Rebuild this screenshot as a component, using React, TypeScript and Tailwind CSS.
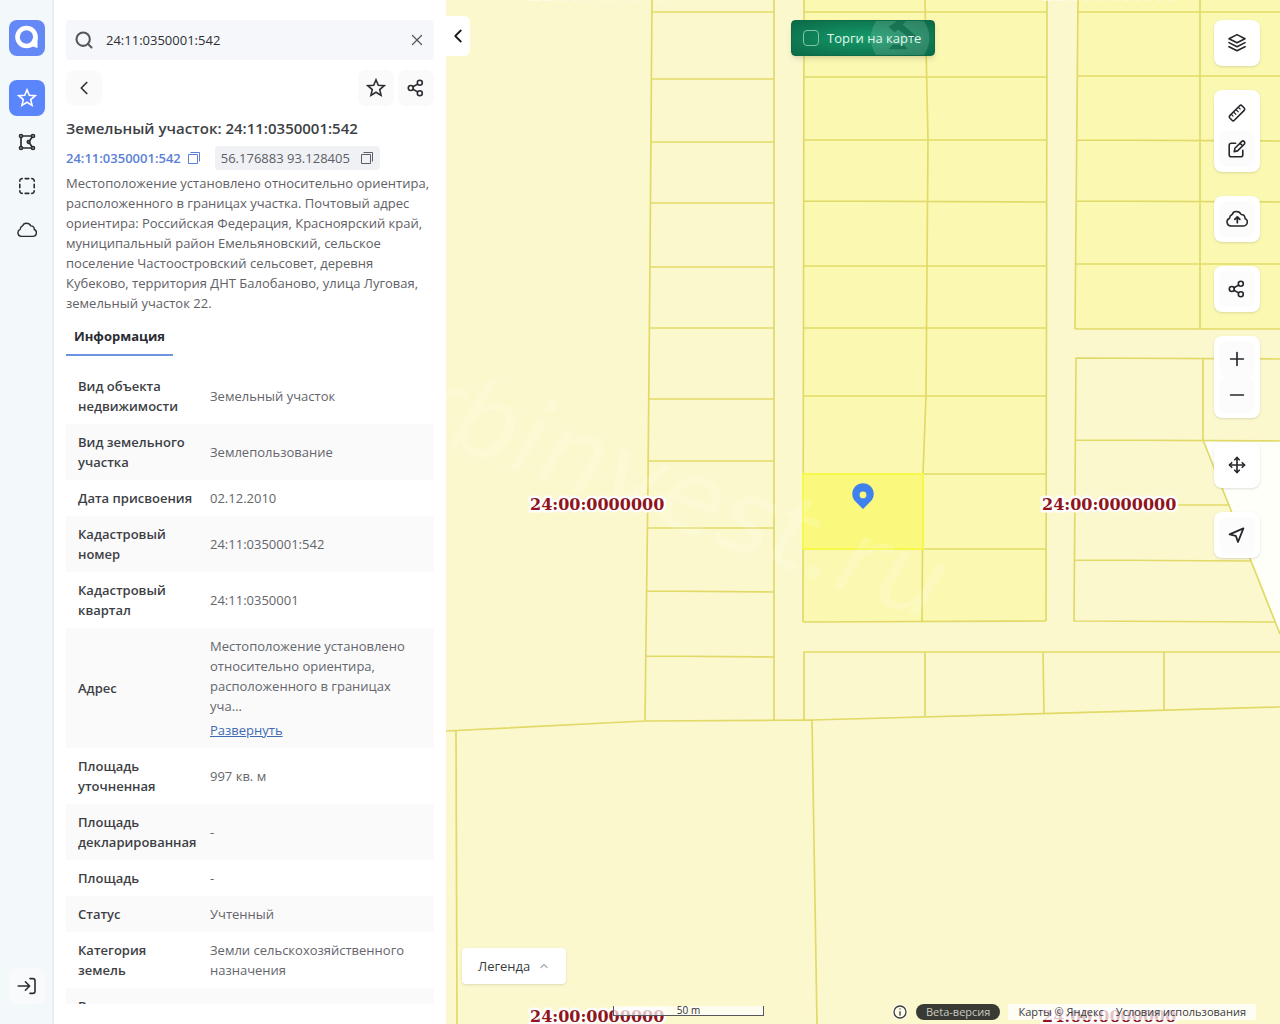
import type { ReactNode } from 'react'

import { useState } from 'react'
import { ChevronLeft, ChevronUp, Minus, Move, Plus, Search, X } from 'lucide-react'
import clsx from 'clsx'

const address =
  'Местоположение установлено относительно ориентира, расположенного в границах участка. Почтовый адрес ориентира: Российская Федерация, Красноярский край, муниципальный район Емельяновский, сельское поселение Частоостровский сельсовет, деревня Кубеково, территория ДНТ Балобаново, улица Луговая, земельный участок 22.'

const rows = [
  { label: 'Вид объекта недвижимости', value: 'Земельный участок' },
  { label: 'Вид земельного участка', value: 'Землепользование' },
  { label: 'Дата присвоения', value: '02.12.2010' },
  { label: 'Кадастровый номер', value: '24:11:0350001:542' },
  { label: 'Кадастровый квартал', value: '24:11:0350001' },
  { label: 'Адрес', value: address, long: true },
  { label: 'Площадь уточненная', value: '997 кв. м' },
  { label: 'Площадь декларированная', value: '-' },
  { label: 'Площадь', value: '-' },
  { label: 'Статус', value: 'Учтенный' },
  { label: 'Категория\nземель', value: 'Земли сельскохозяйственного назначения' },
  { label: 'Вид разрешенного использования', value: '' }
]

function Icon({ children, size = 20 }: { children: ReactNode; size?: number }) {
  return (
    <svg
      width={size}
      height={size}
      viewBox="0 0 20 20"
      fill="none"
      stroke="currentColor"
      strokeWidth="1.6"
      strokeLinecap="round"
      strokeLinejoin="round"
      aria-hidden="true"
    >
      {children}
    </svg>
  )
}

const StarIcon = () => (
  <Icon>
    <path
      strokeLinejoin="miter"
      d="M10 1.8l2.3 5.4 5.9.5-4.5 3.9 1.4 5.8-5.1-3.1-5.1 3.1 1.4-5.8-4.5-3.9 5.9-.5z"
    />
  </Icon>
)

const ShareIcon = () => (
  <Icon>
    <circle cx="4.8" cy="10" r="2.5" />
    <circle cx="13.8" cy="4.8" r="2.5" />
    <circle cx="13.8" cy="15.2" r="2.5" />
    <path d="M7 8.8l4.6-2.7M7 11.2l4.6 2.7" />
  </Icon>
)

const PolygonIcon = () => (
  <Icon>
    <g strokeWidth="1.7">
      <circle cx="4" cy="4" r="1.5" />
      <circle cx="16" cy="4" r="1.5" />
      <circle cx="11.6" cy="10" r="1.3" />
      <circle cx="4" cy="16" r="1.5" />
      <circle cx="16" cy="16" r="1.5" />
      <path d="M4 5.6v8.8M5.6 4h8.8M5.6 16h8.8M15 5.2l-2.6 3.7M15 14.8l-2.6-3.7" />
    </g>
  </Icon>
)

const AreaIcon = () => (
  <Icon>
    <path d="M2.8 5.2V5A2.4 2.4 0 0 1 5.2 2.6M8.2 2.6h3.6M14.8 2.6A2.4 2.4 0 0 1 17.2 5v.2M17.2 8.2v3.6M17.2 14.8v.2a2.4 2.4 0 0 1-2.4 2.4M11.8 17.4H8.2M5.2 17.4A2.4 2.4 0 0 1 2.8 15v-.2M2.8 11.8V8.2" />
  </Icon>
)

const cloudPath =
  'M4.4 16.4a3.7 3.7 0 0 1-1.2-7.1c.2-1.9 1.2-3 2.6-3.6.4-1.6 1.9-2.5 3.6-2.5 2 0 3.6 1 4.4 2.7 2.2.1 3.5 1.6 3.5 3.6 1.4.6 2.1 1.7 2.1 3.1 0 2.1-1.5 3.8-3.6 3.8z'

const CloudIcon = () => (
  <Icon>
    <path d={cloudPath} strokeWidth="1.4" />
  </Icon>
)

const CloudUploadIcon = () => (
  <Icon size={22}>
    <path d={cloudPath} strokeWidth="1.4" />
    <path d="M10.3 13.4V8.3M8 10.4l2.3-2.3 2.3 2.3" />
  </Icon>
)

const LoginIcon = () => (
  <Icon>
    <path d="M1.2 10h11M8.4 5.8l4.2 4.2-4.2 4.2M13 2.6h2.8A2.2 2.2 0 0 1 18 4.8v10.4a2.2 2.2 0 0 1-2.2 2.2H13" />
  </Icon>
)

const LayersIcon = () => (
  <Icon>
    <path d="M10 1.6l8 4.1-8 4.1-8-4.1zM2 9.6l8 4.1 8-4.1M2 13.7l8 4.1 8-4.1" />
  </Icon>
)

const RulerIcon = () => (
  <Icon>
    <g transform="rotate(-45 10 10)">
      <rect x="1.4" y="6.8" width="17.2" height="6.4" rx="1.6" />
      <path strokeWidth="1.2" d="M5 9.4V7M8.3 10V7M11.7 10V7M15 9.4V7" />
    </g>
  </Icon>
)

const EditIcon = () => (
  <Icon>
    <path d="M8.6 4.2H4.2A2 2 0 0 0 2.2 6.2v9.6a2 2 0 0 0 2 2h9.6a2 2 0 0 0 2-2v-4.4" />
    <path d="M7.2 12.6l.7-3.3 6.7-6.7a1.8 1.8 0 0 1 2.6 2.6l-6.7 6.7zM13 4.2l2.6 2.6" />
  </Icon>
)

const LocateIcon = () => (
  <Icon>
    <path strokeWidth="1.8" d="M16.4 3.4L2.6 9.4l6.2 1.4 2.2 6.2z" />
  </Icon>
)

const CopyIcon = () => (
  <svg width="14" height="14" viewBox="0 0 14 14" fill="none" stroke="currentColor" aria-hidden="true">
    <path d="M1.5 3.5h9v9h-9zM3.5 1.5h9v9" />
  </svg>
)

const LogoIcon = () => (
  <svg width="36" height="36" viewBox="0 0 36 36" fill="none" aria-hidden="true">
    <circle cx="17.5" cy="17" r="9" stroke="white" strokeWidth="4.6" />
    <path d="M24.5 17h4v11l-8-2.5z" fill="white" />
  </svg>
)

function SquareButton({
  label,
  className,
  children
}: {
  label: string
  className?: string
  children: ReactNode
}) {
  return (
    <button
      type="button"
      aria-label={label}
      className={clsx('flex size-9 shrink-0 items-center justify-center rounded-lg', className)}
    >
      {children}
    </button>
  )
}

function Sidebar() {
  return (
    <nav className="flex w-[54px] shrink-0 flex-col items-center gap-2 bg-[#f3f8fa] py-5 text-[#2b2d33] shadow-[inset_-2px_0_#e9eef2]">
      <a href="#" aria-label="На главную" className="mb-4 size-9 rounded-lg bg-[#6488f5]">
        <LogoIcon />
      </a>
      <SquareButton label="Избранное" className="bg-[#5b85fb] text-white">
        <StarIcon />
      </SquareButton>
      <SquareButton label="Контур">
        <PolygonIcon />
      </SquareButton>
      <SquareButton label="Область">
        <AreaIcon />
      </SquareButton>
      <SquareButton label="Облако">
        <CloudIcon />
      </SquareButton>
      <SquareButton label="Войти" className="mt-auto bg-[#f9fafb]">
        <LoginIcon />
      </SquareButton>
    </nav>
  )
}

function InfoTable() {
  const [expanded, setExpanded] = useState(false)

  return (
    <table className="mt-3 w-full table-fixed text-left">
      <tbody>
        {rows.map(({ label, value, long }) => (
          <tr key={label} className="even:bg-[#fafafb]">
            <th
              scope="row"
              className="w-[132px] py-2 pl-3 align-middle font-semibold whitespace-pre-line text-[#3d3f45]"
            >
              {label}
            </th>
            <td className="py-2 pr-4 pl-3 align-middle text-[#64666b]">
              {long ? (
                <>
                  <p>{expanded ? value : `${value.slice(0, 80)}…`}</p>
                  <button
                    type="button"
                    onClick={() => setExpanded(!expanded)}
                    className="mt-1 block text-[#3f6cb0] underline"
                  >
                    {expanded ? 'Свернуть' : 'Развернуть'}
                  </button>
                </>
              ) : (
                value
              )}
            </td>
          </tr>
        ))}
      </tbody>
    </table>
  )
}

function Panel() {
  const [query, setQuery] = useState('24:11:0350001:542')

  return (
    <section className="flex w-[392px] shrink-0 flex-col bg-white px-3 py-5">
      <div className="flex h-10 shrink-0 items-center rounded bg-[#f5f7fa] px-2">
        <Search className="size-5 text-[#55575c]" strokeWidth={2.5} />
        <input
          type="text"
          aria-label="Поиск"
          value={query}
          onChange={(e) => setQuery(e.target.value)}
          className="min-w-0 flex-1 bg-transparent px-3 text-[#2e2f33] outline-none"
        />
        <button type="button" aria-label="Очистить" className="text-[#55575c]" onClick={() => setQuery('')}>
          <X className="size-[18px]" strokeWidth={1.6} />
        </button>
      </div>
      <div className="mt-2.5 flex shrink-0 gap-1 text-[#2b2d33]">
        <SquareButton label="Назад" className="mr-auto bg-[#fafafb]">
          <ChevronLeft className="size-[22px]" strokeWidth={1.8} />
        </SquareButton>
        <SquareButton label="В избранное" className="bg-[#fafafb]">
          <StarIcon />
        </SquareButton>
        <SquareButton label="Поделиться" className="bg-[#fafafb]">
          <ShareIcon />
        </SquareButton>
      </div>
      <div className="mt-2.5 min-h-0 flex-1 overflow-hidden">
        <h1 className="text-[15px] leading-6 font-semibold text-[#3d3f45]">
          Земельный участок: 24:11:0350001:542
        </h1>
        <div className="mt-1.5 flex items-center gap-3.5">
          <button type="button" className="flex h-6 items-center gap-1.5 text-[#5b7fd6]">
            <span className="font-semibold">24:11:0350001:542</span>
            <CopyIcon />
          </button>
          <button type="button" className="flex h-6 items-center gap-2.5 rounded bg-[#eff1f5] px-1.5 text-[#5c5f66]">
            56.176883 93.128405
            <CopyIcon />
          </button>
        </div>
        <p className="mt-[3px] text-[#5f6166]">{address}</p>
        <div role="tablist" className="mt-2 flex">
          <button
            type="button"
            role="tab"
            aria-selected="true"
            className="h-[35px] border-b-2 border-[#6c93e0] px-2 pb-1 font-bold text-[#2b2d33]"
          >
            Информация
          </button>
        </div>
        <InfoTable />
      </div>
    </section>
  )
}

const plots = [
  // western strip
  'M652 0L650 260 648 480 645 721M774 0V720',
  'M651 12H774M651 79H774M651 142H774M651 203H774M650 267H774M649 328H774M649 399H774M648 461H774M647 528H774M647 591L774 592M646 656L774 657',
  // central block
  'M804 0L803 622M925 0L928 140 926 396 923 474 922 622M1047 0L1046 621',
  'M804 12H1047M804 77H1047M804 140H1047M804 201L1047 202M804 266H1047M804 328H1047M804 396H1047M803 474H1047M803 549H1047M803 622L1046 621',
  // north-east block
  'M1078 0L1075 329M1200 0V329',
  'M1077 12H1280M1077 76H1280M1077 140L1280 141M1076 201L1280 202M1076 264H1280M1075 329H1280',
  // east block
  'M1280 359L1076 358 1074 621 1275 622M1203 358V440M1075 440L1280 441M1203 440L1280 634M1075 505H1229M1074 560L1252 561',
  // southern row
  'M1280 652H804V720M925 652V717M1043 652L1044 714M1164 652V711',
  'M446 731L645 721 812 720 1280 707M456 731L457 1024M812 720L817 1024'
]

const quarters = [
  [530, -2],
  [1042, -2],
  [530, 510],
  [1042, 510],
  [530, 1022],
  [1042, 1022]
]

function CadastreMap() {
  return (
    <svg
      className="block size-full"
      viewBox="446 0 834 1024"
      preserveAspectRatio="xMidYMid slice"
      role="img"
      aria-label="Кадастровая карта"
    >
      <rect x="446" width="834" height="1024" fill="#fcf8ce" />
      <path d="M804 0H1047L1046 621 803 622zM1078 0H1280V329H1075z" fill="#fbf8b2" />
      <path d="M1203 440L1280 441V634z" fill="#fffff9" />
      <path d={plots.join('')} fill="none" stroke="#e1da68" strokeWidth="1.7" />
      <path d="M803 474H923V549H803z" fill="#fbf87e" stroke="#f6f84a" strokeWidth="2" />
      <text
        transform="translate(405 430) rotate(20)"
        fontSize="103"
        className="fill-white font-['DejaVu_Sans'] italic opacity-15"
      >
        rbinvest.ru
      </text>
      {quarters.map(([x, y]) => (
        <text
          key={`${x}-${y}`}
          x={x}
          y={y}
          fontSize="16"
          stroke="white"
          strokeWidth="5"
          strokeLinejoin="round"
          paintOrder="stroke"
          className="fill-[#8f151b] font-['DejaVu_Serif'] font-bold"
        >
          24:00:0000000
        </text>
      ))}
      <path
        d="M863 509l-7.5-7.5a10.7 10.7 0 1 1 15 0zM863 491.5a3.4 3.4 0 1 0 0 6.8 3.4 3.4 0 0 0 0-6.8z"
        fill="#3f82ee"
        fillRule="evenodd"
      />
    </svg>
  )
}

function ToolGroup({ children }: { children: ReactNode }) {
  return <div className="flex flex-col rounded-lg bg-white p-[5px] shadow">{children}</div>
}

function MapTools() {
  return (
    <div className="absolute top-5 right-5 flex flex-col gap-6 text-[#26272b]">
      <ToolGroup>
        <SquareButton label="Слои">
          <LayersIcon />
        </SquareButton>
      </ToolGroup>
      <ToolGroup>
        <SquareButton label="Линейка">
          <RulerIcon />
        </SquareButton>
        <SquareButton label="Редактировать" className="bg-[#fcfcfd]">
          <EditIcon />
        </SquareButton>
      </ToolGroup>
      <ToolGroup>
        <SquareButton label="Загрузить" className="bg-[#fcfcfd]">
          <CloudUploadIcon />
        </SquareButton>
      </ToolGroup>
      <ToolGroup>
        <SquareButton label="Поделиться картой" className="bg-[#fcfcfd]">
          <ShareIcon />
        </SquareButton>
      </ToolGroup>
      <ToolGroup>
        <SquareButton label="Приблизить" className="bg-[#fcfcfd]">
          <Plus className="size-[22px]" strokeWidth={1.8} />
        </SquareButton>
        <SquareButton label="Отдалить" className="bg-[#fcfcfd]">
          <Minus className="size-[22px]" strokeWidth={1.8} />
        </SquareButton>
      </ToolGroup>
      <ToolGroup>
        <SquareButton label="Переместить">
          <Move className="size-[18px]" strokeWidth={2.2} />
        </SquareButton>
      </ToolGroup>
      <ToolGroup>
        <SquareButton label="Моё местоположение" className="bg-[#fcfcfd]">
          <LocateIcon />
        </SquareButton>
      </ToolGroup>
    </div>
  )
}

function AuctionToggle() {
  return (
    <label className="absolute top-5 left-1/2 flex h-9 w-36 -translate-x-1/2 items-center gap-2 overflow-hidden rounded border border-[#0d6b48] bg-radial from-[#159a6a] to-[#0b6a47] pl-[11px] whitespace-nowrap text-[#e2f5ec] shadow-md">
      <svg className="absolute top-0 right-0 h-full" width="66" height="36" viewBox="0 0 66 36" aria-hidden="true">
        <circle cx="32" cy="18" r="31" fill="#fff" fillOpacity=".14" />
        <path d="M20 6l9-6h9l-3 4 14 12-4 4-15-11-4 3zM24 25h12l4 5H20z" fill="#086042" fillOpacity=".6" />
      </svg>
      <input
        type="checkbox"
        className="relative size-4 appearance-none rounded border border-[#7cc9a8] checked:bg-[#7cc9a8]"
      />
      <span className="relative">Торги на карте</span>
    </label>
  )
}

function MapFooter() {
  return (
    <div className="absolute right-6 bottom-1 flex h-4 items-center gap-2 text-[11px] leading-4 whitespace-nowrap text-[#3a3b3e]">
      <button type="button" aria-label="О карте" className="size-4 rounded-full bg-white/60">
        <Icon size={16}>
          <circle cx="10" cy="10" r="7.5" />
          <path d="M10 9.5V14M10 6v.3" />
        </Icon>
      </button>
      <span className="rounded-full bg-[#393a33] px-2.5 text-[#c9c9c0]">Beta-версия</span>
      <div className="flex gap-3 bg-white/75 px-2.5">
        <span>
          Карты © <a href="#">Яндекс</a>
        </span>
        <a href="#">Условия использования</a>
      </div>
    </div>
  )
}

export default function App() {
  return (
    <div className="flex h-screen overflow-hidden bg-white font-['Open_Sans','Noto_Sans',sans-serif] text-[13px] leading-5">
      <Sidebar />
      <Panel />
      <main className="relative min-w-0 flex-1">
        <CadastreMap />
        <button
          type="button"
          aria-label="Свернуть панель"
          className="absolute top-4 left-0 flex h-10 w-6 items-center justify-center rounded-r-md bg-white text-[#1b1c1e]"
        >
          <ChevronLeft className="size-[22px]" strokeWidth={2} />
        </button>
        <AuctionToggle />
        <MapTools />
        <button
          type="button"
          className="absolute bottom-10 left-4 flex h-9 items-center gap-2 rounded bg-white px-4 text-[#3a3b3e] shadow"
        >
          Легенда
          <ChevronUp className="size-3 text-[#a9abb0]" strokeWidth={2.5} />
        </button>
        <div className="absolute bottom-2 left-[167px] h-2.5 w-[151px] border border-t-0 border-[#55575c] bg-white/70 text-center text-[10px] leading-2 text-[#2e2f33]">
          50 m
        </div>
        <MapFooter />
      </main>
    </div>
  )
}
